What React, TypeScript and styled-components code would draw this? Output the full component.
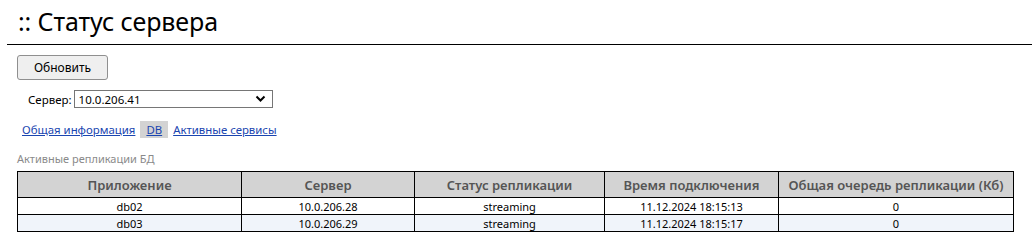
import React from "react";
import styled, { createGlobalStyle } from "styled-components";

const Global = createGlobalStyle`
  html, body { margin: 0; padding: 0; background: #fff; }
  body { font-family: "Noto Sans", "Open Sans", sans-serif; color: #000; }
`;

const Page = styled.div`
  padding: 0 0 0 7px;
`;

const Title = styled.h1`
  margin: 0;
  padding: 4px 0 0 11px;
  height: 45px;
  box-sizing: border-box;
  font-size: 25px;
  font-weight: 400;
  line-height: 34px;
  letter-spacing: -0.1px;
  border-bottom: 1px solid #000;
`;

const Content = styled.div`
  padding: 10px 0 0 10px;
  display: flex;
  flex-direction: column;
  align-items: flex-start;
`;

const Button = styled.button`
  width: 91px;
  height: 25px;
  background: #efefef;
  border: 1px solid #8f8f8f;
  border-radius: 3px;
  font-family: inherit;
  font-size: 12px;
  color: #000;
  padding: 0;
`;

const ServerRow = styled.label`
  margin: 10px 0 0 11px;
  display: flex;
  align-items: center;
  gap: 2px;
  font-size: 11.5px;
`;

const Select = styled.div`
  width: 199px;
  height: 18px;
  box-sizing: border-box;
  border: 1px solid #767676;
  display: flex;
  align-items: center;
  justify-content: space-between;
  padding: 0 6px 0 4px;
  font-size: 11.5px;
`;

const Tabs = styled.div`
  margin: 13px 0 0 5px;
  display: flex;
  align-items: center;
  gap: 5px;
  font-size: 11.4px;
`;

const TabLink = styled.a<{ $active?: boolean }>`
  color: #1a45b0;
  text-decoration: underline;
  background: ${(p) => (p.$active ? "#d3d3d3" : "transparent")};
  padding: ${(p) => (p.$active ? "1px 6px" : "0")};
  cursor: pointer;
`;

const Caption = styled.div`
  margin: 13px 0 0 0;
  font-size: 11px;
  color: #8a8a8a;
`;

const Table = styled.table`
  margin-top: 5px;
  width: 997px;
  border-collapse: collapse;
  table-layout: fixed;
  font-size: 11px;
  border: 1px solid #000;
`;

const Th = styled.th`
  height: 25px;
  background: #d3d3d3;
  color: #555;
  font-weight: 600;
  font-size: 13px;
  border: 1px solid #000;
  padding: 0;
  text-align: center;
`;

const Tr = styled.tr<{ $alt?: boolean }>`
  background: ${(p) => (p.$alt ? "#f0f4fa" : "#fff")};
`;

const Td = styled.td`
  height: 16px;
  line-height: 15px;
  border: 1px solid #000;
  padding: 0;
  text-align: center;
`;

const cols = [
  { t: "Приложение", w: 224 },
  { t: "Сервер", w: 173 },
  { t: "Статус репликации", w: 190 },
  { t: "Время подключения", w: 174 },
  { t: "Общая очередь репликации (Кб)", w: 235 },
];

const rows = [
  ["db02", "10.0.206.28", "streaming", "11.12.2024 18:15:13", "0"],
  ["db03", "10.0.206.29", "streaming", "11.12.2024 18:15:17", "0"],
];

const Chevron = () => (
  <svg width="11" height="8" viewBox="0 0 11 8">
    <path d="M1.5 1.5 L5.5 5.5 L9.5 1.5" fill="none" stroke="#000" strokeWidth="2" />
  </svg>
);

export default function App() {
  return (
    <Page>
      <Global />
      <Title>:: Статус сервера</Title>
      <Content>
        <Button>Обновить</Button>
        <ServerRow>
          Сервер:
          <Select>
            <span>10.0.206.41</span>
            <Chevron />
          </Select>
        </ServerRow>
        <Tabs>
          <TabLink>Общая информация</TabLink>
          <TabLink $active>DB</TabLink>
          <TabLink>Активные сервисы</TabLink>
        </Tabs>
        <Caption>Активные репликации БД</Caption>
        <Table>
          <colgroup>
            {cols.map((c) => (
              <col key={c.t} style={{ width: c.w }} />
            ))}
          </colgroup>
          <thead>
            <tr>
              {cols.map((c) => (
                <Th key={c.t}>{c.t}</Th>
              ))}
            </tr>
          </thead>
          <tbody>
            {rows.map((r, i) => (
              <Tr key={i} $alt={i % 2 === 1}>
                {r.map((v, j) => (
                  <Td key={j}>{v}</Td>
                ))}
              </Tr>
            ))}
          </tbody>
        </Table>
      </Content>
    </Page>
  );
}
